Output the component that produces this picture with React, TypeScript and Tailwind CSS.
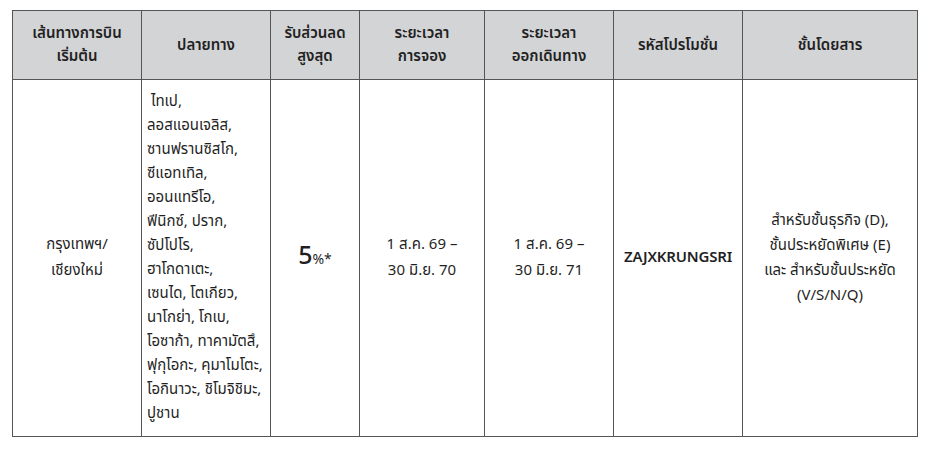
import React from "react";

const dests = [
  "\u00a0ไทเป,",
  "ลอสแอนเจลิส,",
  "ซานฟรานซิสโก,",
  "ซีแอทเทิล,",
  "ออนแทรีโอ,",
  "ฟีนิกซ์, ปราก,",
  "ซัปโปโร,",
  "ฮาโกดาเตะ,",
  "เซนได, โตเกียว,",
  "นาโกย่า, โกเบ,",
  "โอซาก้า, ทาคามัตสึ,",
  "ฟุกุโอกะ, คุมาโมโตะ,",
  "โอกินาวะ, ชิโมจิชิมะ,",
  "ปูชาน",
];

export default function App() {
  const th =
    "border border-[#555] bg-[#d3d4d6] text-center align-middle font-semibold text-[15px] leading-[23px] text-[#222] px-2";
  const td =
    "border border-[#555] text-center align-middle text-[15px] leading-[24px] text-[#1f1f1f] px-2";
  return (
    <div
      className="w-[925px] h-[452px] bg-white pt-[10px] pl-[12px]"
      style={{ fontFamily: '"Noto Sans Thai", "Noto Sans Thai UI", "Noto Sans", "Liberation Sans", sans-serif' }}
    >
      <table className="border-collapse table-fixed w-[905px]">
        <colgroup>
          <col className="w-[129px]" />
          <col className="w-[129px]" />
          <col className="w-[89px]" />
          <col className="w-[125px]" />
          <col className="w-[129px]" />
          <col className="w-[129px]" />
          <col className="w-[175px]" />
        </colgroup>
        <thead>
          <tr className="h-[69px]">
            <th className={th}>
              เส้นทางการบิน
              <br />
              เริ่มต้น
            </th>
            <th className={th}>ปลายทาง</th>
            <th className={th}>
              รับส่วนลด
              <br />
              สูงสุด
            </th>
            <th className={th}>
              ระยะเวลา
              <br />
              การจอง
            </th>
            <th className={th}>
              ระยะเวลา
              <br />
              ออกเดินทาง
            </th>
            <th className={th}>รหัสโปรโมชั่น</th>
            <th className={th}>ชั้นโดยสาร</th>
          </tr>
        </thead>
        <tbody>
          <tr>
            <td className={td + " leading-[26px]"}>
              กรุงเทพฯ/
              <br />
              เชียงใหม่
            </td>
            <td className="border border-[#555] align-top text-left text-[15px] leading-[24px] text-[#1f1f1f] pl-[5px] pr-1 py-[10px] whitespace-nowrap">
              {dests.map((d, i) => (
                <div key={i}>{d}</div>
              ))}
            </td>
            <td className={td}>
              <span className="text-[25px] font-medium">5</span>
              <span className="text-[14px]">%*</span>
            </td>
            <td className={td + " leading-[26px]"}>
              1 ส.ค. 69 –
              <br />
              30 มิ.ย. 70
            </td>
            <td className={td + " leading-[26px]"}>
              1 ส.ค. 69 –
              <br />
              30 มิ.ย. 71
            </td>
            <td className={td + " font-semibold text-[14px] tracking-[-0.2px]"}>ZAJXKRUNGSRI</td>
            <td className={td + " leading-[25px]"}>
              สำหรับชั้นธุรกิจ (D),
              <br />
              ชั้นประหยัดพิเศษ (E)
              <br />
              และ สำหรับชั้นประหยัด
              <br />
              (V/S/N/Q)
            </td>
          </tr>
        </tbody>
      </table>
    </div>
  );
}
